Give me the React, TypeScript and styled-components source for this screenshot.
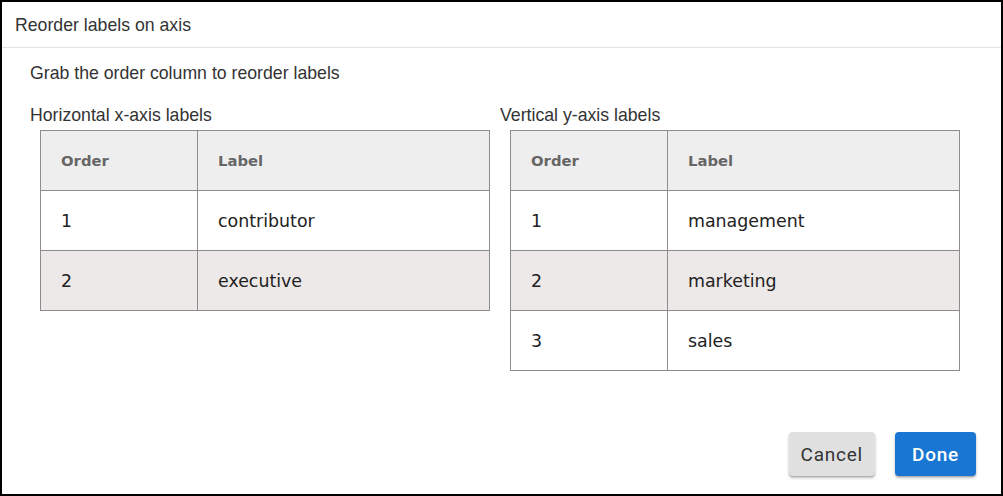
import React from 'react'
import styled, { createGlobalStyle } from 'styled-components'

type Table = {
  title: string
  labels: string[]
}

const tables: Table[] = [
  { title: 'Horizontal x-axis labels', labels: ['contributor', 'executive'] },
  { title: 'Vertical y-axis labels', labels: ['management', 'marketing', 'sales'] }
]

const GlobalStyle = createGlobalStyle`
  html, body {
    margin: 0;
    padding: 0;
    background: #fff;
  }
`

export default function App(): JSX.Element {
  return (
    <>
      <GlobalStyle />
      <Dialog>
        <Header>Reorder labels on axis</Header>
        <Content>
          <Hint>Grab the order column to reorder labels</Hint>
          <Sections>
            {tables.map(t => (
              <Section key={t.title}>
                <SectionTitle>{t.title}</SectionTitle>
                <LabelTable>
                  <thead>
                    <tr>
                      <HeadCell $order>Order</HeadCell>
                      <HeadCell>Label</HeadCell>
                    </tr>
                  </thead>
                  <tbody>
                    {t.labels.map((label, i) => (
                      <Row key={label} $striped={i % 2 === 1}>
                        <Cell>{i + 1}</Cell>
                        <Cell>{label}</Cell>
                      </Row>
                    ))}
                  </tbody>
                </LabelTable>
              </Section>
            ))}
          </Sections>
        </Content>
        <Footer>
          <Button>Cancel</Button>
          <Button $primary>Done</Button>
        </Footer>
      </Dialog>
    </>
  )
}

const Dialog = styled.div`
  width: 1003px;
  height: 496px;
  box-sizing: border-box;
  border: 2px solid #000;
  display: flex;
  flex-direction: column;
  font-family: 'Liberation Sans', Arial, sans-serif;
  color: #333;
`

const Header = styled.div`
  height: 46px;
  display: flex;
  align-items: center;
  padding: 1px 0 0 13px;
  box-sizing: border-box;
  font-size: 17.7px;
  border-bottom: 1px solid #e3e3e3;
`

const Content = styled.div`
  flex: 1;
  padding: 15px 0 0 28px;
`

const Hint = styled.div`
  font-size: 17.7px;
  line-height: 20px;
`

const Sections = styled.div`
  display: flex;
  margin-top: 22px;
`

const Section = styled.div`
  width: 470px;
`

const SectionTitle = styled.div`
  font-size: 17.7px;
  line-height: 20px;
  margin-bottom: 5px;
`

const LabelTable = styled.table`
  margin-left: 10px;
  width: 450px;
  border-collapse: collapse;
  font-family: 'DejaVu Sans', Verdana, sans-serif;
`

const HeadCell = styled.th<{ $order?: boolean }>`
  width: ${props => (props.$order ? '136px' : 'auto')};
  height: 59px;
  padding: 0 0 0 20px;
  text-align: left;
  font-size: 14.8px;
  font-weight: bold;
  color: #666;
  background: #eeeeee;
  border: 1px solid #8c8c8c;
`

const Row = styled.tr<{ $striped?: boolean }>`
  background: ${props => (props.$striped ? '#ede9e8' : '#fff')};
`

const Cell = styled.td`
  height: 59px;
  padding: 0 0 0 20px;
  font-size: 17.4px;
  color: #222;
  border: 1px solid #8c8c8c;
`

const Footer = styled.div`
  display: flex;
  justify-content: flex-end;
  gap: 20px;
  padding: 0 25px 18px 0;
`

const Button = styled.button<{ $primary?: boolean }>`
  height: 44px;
  padding: ${props => (props.$primary ? '0 17px' : '0 12px')};
  border: none;
  border-radius: 4px;
  font-family: Roboto, sans-serif;
  font-size: 19px;
  font-weight: ${props => (props.$primary ? 500 : 400)};
  letter-spacing: 0.04em;
  color: ${props => (props.$primary ? '#fff' : '#333')};
  background: ${props => (props.$primary ? '#1976d2' : '#e0e0e0')};
  box-shadow: 0 2px 3px rgba(0, 0, 0, 0.25), 0 1px 1px rgba(0, 0, 0, 0.14);
  cursor: pointer;
`
